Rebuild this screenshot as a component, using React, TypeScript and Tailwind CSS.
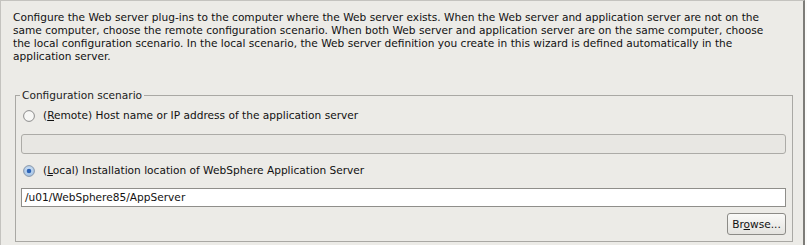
const font = { fontFamily: '"DejaVu Sans", Verdana, sans-serif' };

function Radio({ checked }: { checked?: boolean }) {
  return (
    <svg width="12" height="12" viewBox="0 0 12 12" className="shrink-0">
      <defs>
        <radialGradient id="rsel" cx="0.5" cy="0.4" r="0.6">
          <stop offset="0" stopColor="#d6e6f7" />
          <stop offset="1" stopColor="#9fbfe2" />
        </radialGradient>
      </defs>
      <circle
        cx="6"
        cy="6"
        r="5.4"
        fill={checked ? "url(#rsel)" : "#f7f7f5"}
        stroke={checked ? "#8a98aa" : "#8c8c8c"}
        strokeWidth="1"
      />
      {checked && <circle cx="6" cy="6" r="2.3" fill="#2c63b6" />}
    </svg>
  );
}

export default function App() {
  return (
    <div
      className="w-[807px] h-[245px] overflow-hidden bg-[#fbfbfa] text-[#111] text-[10.6px]"
      style={font}
    >
      <div className="w-[805px] h-[245px] bg-[#ecebe7] border-t border-l border-[#c4c3bf] border-r-2 border-r-[#7d7c78] flex flex-col">
        <p className="w-[774px] pl-[12px] pt-[10px] leading-[13px]">
          Configure the Web server plug-ins to the computer where the Web server exists. When the Web server and
          application server are not on the same computer, choose the remote configuration scenario. When both Web
          server and application server are on the same computer, choose the local configuration scenario. In the
          local scenario, the Web server definition you create in this wizard is defined automatically in the
          application server.
        </p>

        <fieldset className="ml-[14px] mt-[26px] w-[778px] h-[153px] border border-[#a9a8a4] px-[5px] flex flex-col">
          <legend className="ml-[-1px] px-[2px] leading-[13px] text-[#222]">Configuration scenario</legend>

          <label className="flex items-center gap-[8px] pl-[2px] mt-[7px] h-[14px]">
            <Radio />
            <span>
              (<span className="underline">R</span>emote) Host name or IP address of the application server
            </span>
          </label>

          <div className="mt-[11px] h-[20px] w-[765px] rounded-[3px] border border-[#acaba7] bg-[#e8e7e3]" />

          <label className="flex items-center gap-[8px] pl-[2px] mt-[10px] h-[14px]">
            <Radio checked />
            <span>
              (<span className="underline">L</span>ocal) Installation location of WebSphere Application Server
            </span>
          </label>

          <div className="mt-[10px] h-[19px] w-[765px] border border-[#8f8e8a] bg-white flex items-center pl-[3px]">
            /u01/WebSphere85/AppServer
          </div>

          <div className="flex justify-end w-[765px] mt-[6px]">
            <button className="h-[22px] w-[59px] rounded-[3px] border border-[#8c8b87] bg-gradient-to-b from-[#fafaf8] to-[#e4e3df] text-[#111] leading-none">
              Br<span className="underline">o</span>wse...
            </button>
          </div>
        </fieldset>
      </div>
    </div>
  );
}
